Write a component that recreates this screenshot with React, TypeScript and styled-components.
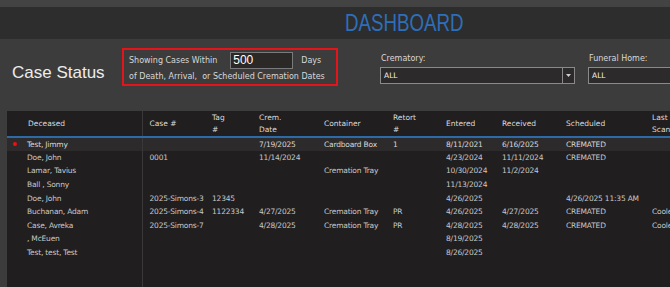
import React from 'react';
import styled, { createGlobalStyle } from 'styled-components';

const GlobalStyle = createGlobalStyle`
  html, body {
    margin: 0;
    padding: 0;
    background: #3d3c3c;
    font-family: "DejaVu Sans", "Liberation Sans", sans-serif;
    overflow: hidden;
  }
`;

const Page = styled.div`
  width: 670px;
  height: 287px;
  display: flex;
  flex-direction: column;
  background: #3d3c3c;
  overflow: hidden;
`;

const TopStrip = styled.div`
  height: 7px;
  flex-shrink: 0;
  background: #434343;
`;

const HeaderBar = styled.div`
  height: 32px;
  flex-shrink: 0;
  background: #2e2d2d;
  display: flex;
  align-items: center;
  padding-left: 345px;
`;

const Title = styled.h1`
  margin: 0;
  font-family: "Liberation Sans", Arial, sans-serif;
  font-size: 24px;
  font-weight: 400;
  color: #2d6fba;
  transform: scaleX(0.78);
  transform-origin: left center;
`;

const Controls = styled.div`
  height: 72px;
  flex-shrink: 0;
  display: flex;
  align-items: flex-start;
`;

const PageTitle = styled.div`
  flex-shrink: 0;
  margin: 24px 0 0 12px;
  width: 110px;
  font-family: "Liberation Sans", Arial, sans-serif;
  font-size: 17px;
  color: #ececec;
`;

const RangeBox = styled.div`
  flex-shrink: 0;
  margin-top: 9px;
  width: 207px;
  height: 34px;
  border: 2px solid #e3151a;
  display: flex;
  flex-direction: column;
  padding-left: 5px;
  font-size: 8px;
  color: #d8d8d8;
  white-space: nowrap;
`;

const RangeLine = styled.div<{ h: number }>`
  display: flex;
  align-items: center;
  height: ${(p) => p.h}px;
`;

const DaysInput = styled.div`
  width: 63px;
  height: 17px;
  margin: 0 8px 0 13px;
  background: #2b2828;
  border: 1px solid #7a7a7a;
  color: #fff;
  font-family: "Liberation Sans", Arial, sans-serif;
  font-size: 12px;
  line-height: 15px;
  padding-left: 2px;
  box-sizing: border-box;
`;

const FilterGroup = styled.div<{ w: number; ml: number }>`
  flex-shrink: 0;
  margin: 15px 0 0 ${(p) => p.ml}px;
  width: ${(p) => p.w}px;
  display: flex;
  flex-direction: column;
  gap: 4px;
`;

const FilterLabel = styled.div`
  font-size: 8px;
  color: #d8d8d8;
  padding-left: 1px;
`;

const Select = styled.div`
  height: 17px;
  box-sizing: border-box;
  border: 1px solid #8a8a8a;
  background: #2c2a2a;
  display: flex;
  align-items: stretch;
`;

const SelectValue = styled.div`
  flex: 1;
  font-size: 7.5px;
  color: #f2f2f2;
  display: flex;
  align-items: center;
  padding-left: 3px;
`;

const SelectArrow = styled.div`
  width: 11px;
  border-left: 1px solid #8a8a8a;
  display: flex;
  align-items: center;
  justify-content: center;
`;

const TableWrap = styled.div`
  margin-left: 7px;
  flex: 1;
  background: #211e1f;
  overflow: hidden;
`;

const Grid = styled.table`
  border-collapse: collapse;
  table-layout: fixed;
  width: 690px;
  font-size: 7.5px;
  letter-spacing: -0.2px;
`;

const HeadCell = styled.th<{ w: number; first?: boolean }>`
  box-sizing: border-box;
  width: ${(p) => p.w}px;
  height: 26px;
  padding: 0 0 0 ${(p) => (p.first ? 21 : 7)}px;
  text-align: left;
  font-weight: 400;
  letter-spacing: 0;
  color: #dcdcdc;
  line-height: 12px;
  border-right: ${(p) => (p.first ? '1px solid #3a3838' : 'none')};
  border-bottom: 2px solid #2c6aa8;
  white-space: nowrap;
  overflow: hidden;
`;

const Row = styled.tr<{ selected?: boolean }>`
  height: 13.6px;
  font-weight: 400;
  background: ${(p) => (p.selected ? '#2c2a2a' : 'transparent')};
  color: ${(p) => (p.selected ? '#d8d8d8' : '#c8c8c8')};
`;

const Cell = styled.td<{ first?: boolean }>`
  box-sizing: border-box;
  padding: 0 0 0 ${(p) => (p.first ? 20 : 7)}px;
  white-space: nowrap;
  overflow: hidden;
  position: relative;
  border-right: ${(p) => (p.first ? '1px solid #3a3838' : 'none')};
`;

const FillerRow = styled.tr`
  height: 40px;
`;

const Dot = styled.span`
  position: absolute;
  left: 6px;
  top: 50%;
  width: 4px;
  height: 4px;
  margin-top: -2px;
  border-radius: 50%;
  background: #f01010;
`;

const columns: { label: React.ReactNode; w: number }[] = [
  { label: 'Deceased', w: 135 },
  { label: 'Case #', w: 63 },
  { label: <>Tag<br />#</>, w: 47 },
  { label: <>Crem.<br />Date</>, w: 65 },
  { label: 'Container', w: 69 },
  { label: <>Retort<br />#</>, w: 53 },
  { label: 'Entered', w: 56 },
  { label: 'Received', w: 64 },
  { label: 'Scheduled', w: 86 },
  { label: <>Last<br />Scan</>, w: 52 },
];

const rows: string[][] = [
  ['Test, Jimmy', '', '', '7/19/2025', 'Cardboard Box', '1', '8/11/2021', '6/16/2025', 'CREMATED', ''],
  ['Doe, John', '0001', '', '11/14/2024', '', '', '4/23/2024', '11/11/2024', 'CREMATED', ''],
  ['Lamar, Tavius', '', '', '', 'Cremation Tray', '', '10/30/2024', '11/2/2024', '', ''],
  ['Ball , Sonny', '', '', '', '', '', '11/13/2024', '', '', ''],
  ['Doe, John', '2025-Simons-3', '12345', '', '', '', '4/26/2025', '', '4/26/2025 11:35 AM', ''],
  ['Buchanan, Adam', '2025-Simons-4', '1122334', '4/27/2025', 'Cremation Tray', 'PR', '4/26/2025', '4/27/2025', 'CREMATED', 'Cooler'],
  ['Case, Avreka', '2025-Simons-7', '', '4/28/2025', 'Cremation Tray', 'PR', '4/28/2025', '4/28/2025', 'CREMATED', 'Cooler'],
  [', McEuen', '', '', '', '', '', '8/19/2025', '', '', ''],
  ['Test, test, Test', '', '', '', '', '', '8/26/2025', '', '', ''],
];

const Dropdown = ({ arrow }: { arrow?: boolean }) => (
  <Select>
    <SelectValue>ALL</SelectValue>
    {arrow && (
      <SelectArrow>
        <svg width="5" height="3" viewBox="0 0 5 3">
          <path d="M0 0h5L2.5 3z" fill="#cfcfcf" />
        </svg>
      </SelectArrow>
    )}
  </Select>
);

export default function App() {
  return (
    <Page>
      <GlobalStyle />
      <TopStrip />
      <HeaderBar>
        <Title>DASHBOARD</Title>
      </HeaderBar>
      <Controls>
        <PageTitle>Case Status</PageTitle>
        <RangeBox>
          <RangeLine h={20}>
            Showing Cases Within
            <DaysInput>500</DaysInput>
            Days
          </RangeLine>
          <RangeLine h={13}>of Death, Arrival,&nbsp; or Scheduled Cremation Dates</RangeLine>
        </RangeBox>
        <FilterGroup w={195} ml={42}>
          <FilterLabel>Crematory:</FilterLabel>
          <Dropdown arrow />
        </FilterGroup>
        <FilterGroup w={100} ml={13}>
          <FilterLabel>Funeral Home:</FilterLabel>
          <Dropdown />
        </FilterGroup>
      </Controls>
      <TableWrap>
        <Grid>
          <thead>
            <tr>
              {columns.map((c, i) => (
                <HeadCell key={i} w={c.w} first={i === 0}>
                  {c.label}
                </HeadCell>
              ))}
            </tr>
          </thead>
          <tbody>
            {rows.map((r, ri) => (
              <Row key={ri} selected={ri === 0}>
                {r.map((v, ci) => (
                  <Cell key={ci} first={ci === 0}>
                    {ri === 0 && ci === 0 && <Dot />}
                    {v}
                  </Cell>
                ))}
              </Row>
            ))}
            <FillerRow>
              <Cell first />
              <Cell colSpan={9} />
            </FillerRow>
          </tbody>
        </Grid>
      </TableWrap>
    </Page>
  );
}
